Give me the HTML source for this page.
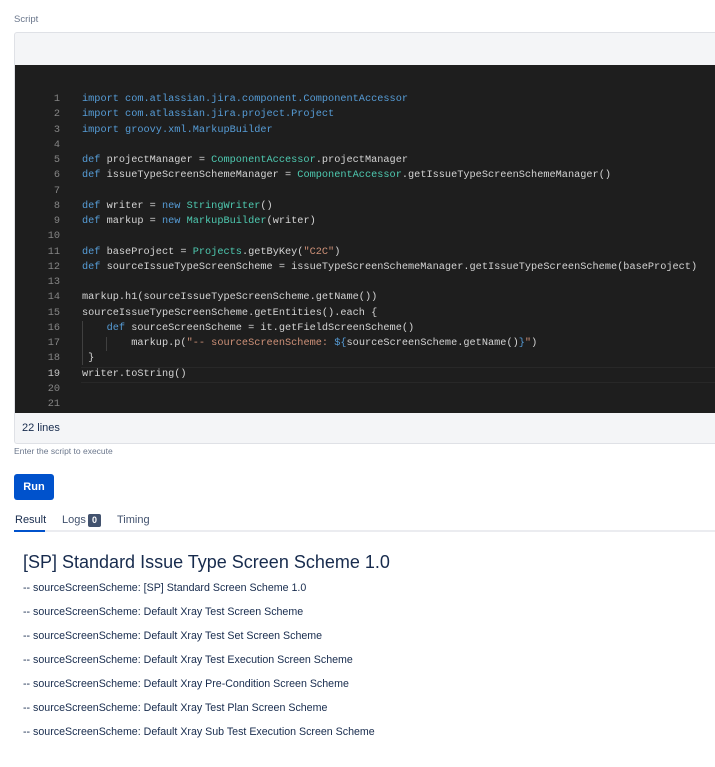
<!DOCTYPE html>
<html><head><meta charset="utf-8"><style>
body{margin:0;background:#fff;font-family:"Liberation Sans",sans-serif;width:715px;height:767px;overflow:hidden;position:relative}
.abs{position:absolute}
.code{font-family:"Liberation Mono",monospace;font-size:10.25px;line-height:15.25px;white-space:pre;color:#d4d4d4}
.k{color:#569cd6}.c{color:#4ec9b0}.s{color:#ce9178}
.ln{color:#858585;text-align:right;width:46px}
.r{font-size:10.65px;color:#172b4d;position:absolute;left:23px}
</style></head><body>
<div class="abs" style="left:14px;top:14px;font-size:9.5px;color:#6b778c">Script</div>
<div class="abs" style="left:14px;top:32px;width:720px;height:410px;border:1px solid #dfe1e6;border-radius:3px;background:#f4f5f7"></div>
<div class="abs" style="left:15px;top:65px;width:720px;height:348px;background:#1e1e1e"></div>
<div class="abs code ln" style="left:14px;top:92px">1
2
3
4
5
6
7
8
9
10
11
12
13
14
15
16
17
18
<span style="color:#c6c6c6">19</span>
20
21</div>
<div class="abs" style="left:81px;top:367px;width:640px;height:14px;border-top:1px solid #282828;border-bottom:1px solid #282828"></div>
<div class="abs" style="left:82px;top:321px;width:1px;height:44px;background:#404040"></div>
<div class="abs" style="left:106px;top:337px;width:1px;height:14px;background:#404040"></div>
<div class="abs code" style="left:82px;top:92px"><span class="k">import com.atlassian.jira.component.ComponentAccessor</span>
<span class="k">import com.atlassian.jira.project.Project</span>
<span class="k">import groovy.xml.MarkupBuilder</span>

<span class="k">def</span> projectManager = <span class="c">ComponentAccessor</span>.projectManager
<span class="k">def</span> issueTypeScreenSchemeManager = <span class="c">ComponentAccessor</span>.getIssueTypeScreenSchemeManager()

<span class="k">def</span> writer = <span class="k">new</span> <span class="c">StringWriter</span>()
<span class="k">def</span> markup = <span class="k">new</span> <span class="c">MarkupBuilder</span>(writer)

<span class="k">def</span> baseProject = <span class="c">Projects</span>.getByKey(<span class="s">"C2C"</span>)
<span class="k">def</span> sourceIssueTypeScreenScheme = issueTypeScreenSchemeManager.getIssueTypeScreenScheme(baseProject)

markup.h1(sourceIssueTypeScreenScheme.getName())
sourceIssueTypeScreenScheme.getEntities().each {
    <span class="k">def</span> sourceScreenScheme = it.getFieldScreenScheme()
        markup.p(<span class="s">"-- sourceScreenScheme: </span><span class="k">${</span>sourceScreenScheme.getName()<span class="k">}</span><span class="s">"</span>)
 }
writer.toString()</div>
<div class="abs" style="left:22px;top:422px;font-size:11px;color:#172b4d">22 lines</div>
<div class="abs" style="left:14px;top:446px;font-size:8.5px;color:#6b778c">Enter the script to execute</div>
<div class="abs" style="left:14px;top:474px;width:40px;height:26px;background:#0052cc;border-radius:3px;color:#fff;font-size:11px;font-weight:bold;text-align:center;line-height:26px">Run</div>
<div class="abs" style="left:14px;top:530px;width:701px;height:2px;background:#ebecf0"></div>
<div class="abs" style="left:14px;top:530px;width:31px;height:2px;background:#0052cc"></div>
<div class="abs" style="left:15px;top:514px;font-size:11px;color:#172b4d">Result</div>
<div class="abs" style="left:62px;top:514px;font-size:11px;color:#42526e">Logs</div>
<div class="abs" style="left:88px;top:514px;width:13px;height:13px;background:#42526e;border-radius:2px;color:#fff;font-size:9px;text-align:center;line-height:13px;font-weight:bold">0</div>
<div class="abs" style="left:117px;top:514px;font-size:11px;color:#42526e">Timing</div>
<div class="abs" style="left:23px;top:552px;font-size:18px;color:#172b4d">[SP] Standard Issue Type Screen Scheme 1.0</div>
<div class="r" style="top:582px">-- sourceScreenScheme: [SP] Standard Screen Scheme 1.0</div>
<div class="r" style="top:606px">-- sourceScreenScheme: Default Xray Test Screen Scheme</div>
<div class="r" style="top:630px">-- sourceScreenScheme: Default Xray Test Set Screen Scheme</div>
<div class="r" style="top:654px">-- sourceScreenScheme: Default Xray Test Execution Screen Scheme</div>
<div class="r" style="top:678px">-- sourceScreenScheme: Default Xray Pre-Condition Screen Scheme</div>
<div class="r" style="top:702px">-- sourceScreenScheme: Default Xray Test Plan Screen Scheme</div>
<div class="r" style="top:726px">-- sourceScreenScheme: Default Xray Sub Test Execution Screen Scheme</div>
</body></html>
